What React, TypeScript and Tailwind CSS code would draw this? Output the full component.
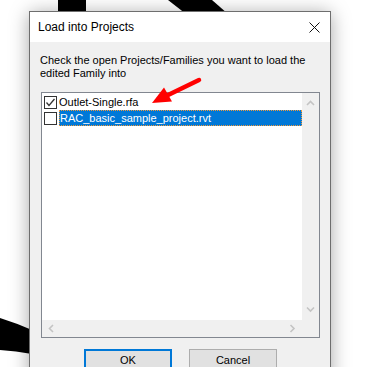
import React from 'react'

const FONT = '"Liberation Sans", Arial, sans-serif'

function Chevron({ dir }: { dir: 'up' | 'down' | 'left' | 'right' }) {
  const pts = {
    up: '1,5 4.5,1.5 8,5',
    down: '1,1.5 4.5,5 8,1.5',
    left: '5,1 1.5,4.5 5,8',
    right: '1.5,1 5,4.5 1.5,8',
  }[dir]
  const vertical = dir === 'up' || dir === 'down'
  return (
    <svg width={vertical ? 9 : 7} height={vertical ? 7 : 9} viewBox={vertical ? '0 0 9 7' : '0 0 7 9'}>
      <polyline points={pts} fill="none" stroke="#c4c4c4" strokeWidth="1.6" />
    </svg>
  )
}

function CheckBox({ checked }: { checked: boolean }) {
  return (
    <div className="w-[13px] h-[13px] border border-[#333333] bg-white flex items-center justify-center shrink-0">
      {checked && (
        <svg width="11" height="11" viewBox="0 0 11 11">
          <polyline points="1.5,5.5 4,8.5 9.5,2" fill="none" stroke="#333333" strokeWidth="1.3" />
        </svg>
      )}
    </div>
  )
}

export default function App() {
  return (
    <div className="relative w-[386px] h-[367px] overflow-hidden bg-white" style={{ fontFamily: FONT }}>
      {/* drawing behind the dialog */}
      <svg className="absolute inset-0" width="386" height="367">
        <rect x="58" y="0" width="28" height="14" fill="#000" />
        <polygon points="168,0 212,0 228,14 186,14" fill="#000" />
        <path d="M0,318 Q16,323 32,330 L32,354 Q16,351 0,350 Z" fill="#000" />
      </svg>

      <div className="relative pl-[29px] pt-[11px]">
        {/* dialog window */}
        <div className="w-[302px] h-[380px] border border-[#6e6e6e] bg-[#f0f0f0] shadow-[0_2px_18px_rgba(0,0,0,0.35)] flex flex-col">
          {/* title bar */}
          <div className="h-[30px] bg-white flex items-center justify-between pl-[8px] pr-[10px]">
            <span className="text-[12px] text-black">Load into Projects</span>
            <svg width="11" height="11" viewBox="0 0 11 11">
              <path d="M0.5,0.5 L10.5,10.5 M10.5,0.5 L0.5,10.5" stroke="#111" strokeWidth="1" />
            </svg>
          </div>

          {/* body */}
          <div className="flex flex-col pt-[12px] pl-[10px]">
            <p className="text-[11px] leading-[13px] text-black">
              Check the open Projects/Families you want to load the
              <br />
              edited Family into
            </p>

            {/* list box */}
            <div className="mt-[12px] ml-px w-[279px] h-[246px] border border-[#828790] flex flex-col">
              <div className="flex flex-1">
                <div className="flex-1 bg-white pt-px pl-[2px] flex flex-col">
                  <div className="h-[16px] flex items-center">
                    <CheckBox checked />
                    <span className="ml-[2px] text-[11px] leading-[16px] text-black">Outlet-Single.rfa</span>
                  </div>
                  <div className="h-[16px] flex items-center">
                    <CheckBox checked={false} />
                    <span className="ml-[2px] flex-1 h-[16px] bg-[#0078d7] border border-dotted border-[#f29a3a] text-[11px] leading-[14px] text-white">
                      RAC_basic_sample_project.rvt
                    </span>
                  </div>
                </div>
                {/* vertical scrollbar */}
                <div className="w-[17px] bg-[#f0f0f0] flex flex-col items-center justify-between pt-[7px] pb-[7px]">
                  <Chevron dir="up" />
                  <Chevron dir="down" />
                </div>
              </div>
              {/* horizontal scrollbar */}
              <div className="h-[17px] bg-[#f0f0f0] flex items-center">
                <div className="w-[260px] flex items-center justify-between pl-[6px] pr-[6px]">
                  <Chevron dir="left" />
                  <Chevron dir="right" />
                </div>
              </div>
            </div>
          </div>

          {/* buttons */}
          <div className="flex gap-[17px] pl-[54px] mt-[11px]">
            <button className="w-[88px] h-[23px] bg-[#e1e1e1] border-2 border-[#0078d7] text-[11px] text-black flex items-center justify-center">
              OK
            </button>
            <button className="w-[88px] h-[23px] bg-[#e1e1e1] border border-[#adadad] text-[11px] text-black flex items-center justify-center">
              Cancel
            </button>
          </div>
        </div>
      </div>

      {/* red arrow annotation */}
      <svg className="absolute inset-0 pointer-events-none" width="386" height="367">
        <line x1="199" y1="80" x2="166" y2="96" stroke="#ff0000" strokeWidth="4.5" strokeLinecap="round" />
        <polygon points="152,103 164,87.5 172,101.5" fill="#ff0000" />
      </svg>
    </div>
  )
}
